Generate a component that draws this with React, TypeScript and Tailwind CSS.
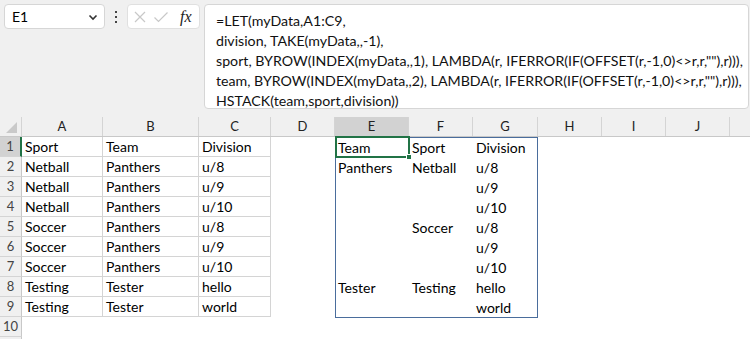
import React from "react";

const cols = [
  { l: "", w: 22 },
  { l: "A", w: 81 },
  { l: "B", w: 96 },
  { l: "C", w: 72 },
  { l: "D", w: 64 },
  { l: "E", w: 74 },
  { l: "F", w: 64 },
  { l: "G", w: 65 },
  { l: "H", w: 64 },
  { l: "I", w: 64 },
  { l: "J", w: 64 },
  { l: "", w: 60 },
];

const data: string[][] = [
  ["Sport", "Team", "Division", "", "Team", "Sport", "Division"],
  ["Netball", "Panthers", "u/8", "", "Panthers", "Netball", "u/8"],
  ["Netball", "Panthers", "u/9", "", "", "", "u/9"],
  ["Netball", "Panthers", "u/10", "", "", "", "u/10"],
  ["Soccer", "Panthers", "u/8", "", "", "Soccer", "u/8"],
  ["Soccer", "Panthers", "u/9", "", "", "", "u/9"],
  ["Soccer", "Panthers", "u/10", "", "", "", "u/10"],
  ["Testing", "Tester", "hello", "", "Tester", "Testing", "hello"],
  ["Testing", "Tester", "world", "", "", "", "world"],
  [],
];

const formula = [
  "=LET(myData,A1:C9,",
  "division, TAKE(myData,,-1),",
  'sport, BYROW(INDEX(myData,,1), LAMBDA(r, IFERROR(IF(OFFSET(r,-1,0)<>r,r,""),r))),',
  'team, BYROW(INDEX(myData,,2), LAMBDA(r, IFERROR(IF(OFFSET(r,-1,0)<>r,r,""),r))),',
  "HSTACK(team,sport,division))",
];

export default function App() {
  const font = { fontFamily: "Lato, 'Open Sans', sans-serif" };
  return (
    <div className="w-[750px] h-[339px] overflow-hidden bg-white text-[#000]" style={font}>
      {/* top bar */}
      <div className="h-[117px] bg-[#f0f0f0] flex items-start pt-[4px] pl-[4px] pr-[1px]">
        <div className="w-[101px] h-[25px] bg-white border border-[#d6d6d6] rounded-[4px] flex items-center justify-between pl-[7px] pr-[5px]">
          <span className="text-[14px]">E1</span>
          <svg width="12" height="12" viewBox="0 0 12 12">
            <path d="M2.5 4.5 L6 8 L9.5 4.5" fill="none" stroke="#333" strokeWidth="1.6" />
          </svg>
        </div>
        <div className="w-[22px] h-[25px] flex flex-col items-center justify-center gap-[3px]">
          <div className="w-[2px] h-[2px] bg-[#444]" />
          <div className="w-[2px] h-[2px] bg-[#444]" />
          <div className="w-[2px] h-[2px] bg-[#444]" />
        </div>
        <div className="w-[73px] h-[25px] bg-white border border-[#e0e0e0] rounded-[4px] flex items-center pl-[5px] gap-[6px]">
          <svg width="14" height="14" viewBox="0 0 14 14">
            <path d="M2 2 L12 12 M12 2 L2 12" stroke="#c8c8c8" strokeWidth="1.2" />
          </svg>
          <svg width="16" height="14" viewBox="0 0 16 14">
            <path d="M1.5 7.5 L5.5 11.5 L14.5 2.5" fill="none" stroke="#c8c8c8" strokeWidth="1.2" />
          </svg>
          <span
            className="text-[16px] italic ml-[5px] text-[#222]"
            style={{ fontFamily: "'Liberation Serif', serif" }}
          >
            fx
          </span>
        </div>
        <div className="ml-[4px] flex-1 h-[105px] bg-white border border-[#d6d6d6] rounded-[4px] pl-[11px] pt-[6px]">
          {formula.map((f, i) => (
            <div key={i} className="h-[20px] leading-[20px] text-[14.2px] text-[#111] whitespace-pre">
              {f}
            </div>
          ))}
        </div>
      </div>

      {/* grid */}
      <div className="relative">
        <div className="flex h-[20px] bg-[#f0f0f0] border-b border-[#c8c8c8]">
          {cols.map((c, i) => (
            <div
              key={i}
              className={`shrink-0 h-full flex items-center justify-center text-[13px] text-[#222] border-r border-[#d4d4d4] ${
                c.l === "E" ? "bg-[#d2d2d2]" : ""
              }`}
              style={{ width: c.w }}
            >
              {i === 0 ? (
                <svg width="21" height="19" viewBox="0 0 21 19">
                  <path d="M17 5 L17 16 L6 16 Z" fill="#c9c9c9" />
                </svg>
              ) : (
                c.l
              )}
            </div>
          ))}
        </div>
        {data.map((row, r) => (
          <div key={r} className="flex h-[20px]">
            {cols.map((c, i) => {
              if (i === 0) {
                return (
                  <div
                    key={i}
                    className={`shrink-0 h-full flex items-center justify-center text-[13px] text-[#444] border-b border-[#d4d4d4] ${
                      r === 0
                        ? "bg-[#d2d2d2] border-r-2 border-r-[#217346]"
                        : "bg-[#f0f0f0] border-r border-r-[#c8c8c8]"
                    }`}
                    style={{ width: c.w }}
                  >
                    {r + 1}
                  </div>
                );
              }
              const v = row[i - 1] ?? "";
              const lines = i <= 3 && r <= 8;
              return (
                <div
                  key={i}
                  className={`shrink-0 h-full flex items-center pl-[3px] text-[14px] whitespace-nowrap ${
                    lines ? "border-r border-b border-[#d4d4d4]" : ""
                  }`}
                  style={{ width: c.w }}
                >
                  {v}
                </div>
              );
            })}
          </div>
        ))}
        <div className="flex h-[6px]">
          <div className="w-[22px] h-full bg-[#f0f0f0] border-r border-[#c8c8c8]" />
        </div>
        {/* spill border */}
        <div className="absolute left-[335px] top-[20px] w-[203px] h-[181px] border border-[#4a6d9c] pointer-events-none" />
        {/* selected cell */}
        <div className="absolute left-[335px] top-[19px] w-[75px] h-[22px] border-2 border-[#217346] pointer-events-none">
          <div className="absolute right-[-4px] bottom-[-4px] w-[6px] h-[6px] bg-[#217346] border border-white" />
        </div>
      </div>
    </div>
  );
}
